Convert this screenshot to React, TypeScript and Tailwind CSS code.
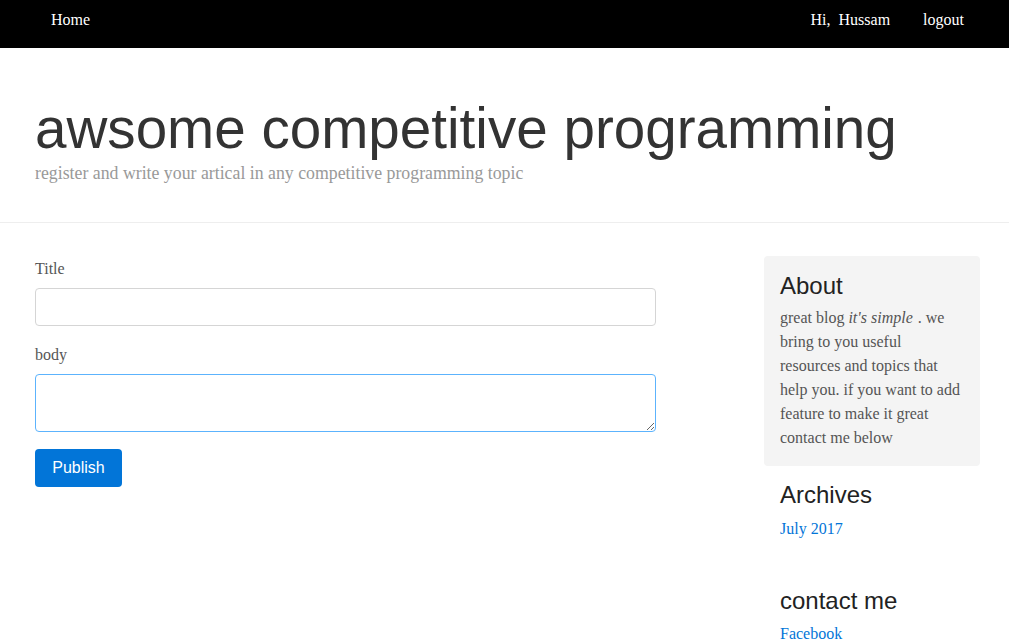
export default function App() {
  return (
    <div className="min-h-screen bg-white font-['Liberation_Serif',serif] text-[16px] text-[#555]">
      {/* NAVBAR */}
      <nav className="h-12 bg-black flex items-start pt-[8px] pl-[51px] pr-[45px] text-white">
        <a className="leading-6">Home</a>
        <div className="ml-auto flex items-center gap-[33px] leading-6">
          <span className="whitespace-pre">Hi,  Hussam</span>
          <a>logout</a>
        </div>
      </nav>

      {/* HEADER */}
      <header className="border-b border-[#eee] px-[35px] pt-[50px] pb-[35px]">
        <h1 className="font-['Liberation_Sans',Arial,sans-serif] text-[56.6px] leading-[62px] text-[#333]">
          awsome competitive programming
        </h1>
        <p className="text-[17.8px] leading-[27px] text-[#999]">
          register and write your artical in any competitive programming topic
        </p>
      </header>

      {/* CONTENT */}
      <div className="flex pl-[35px] pt-[35px]">
        <main className="w-[621px] pt-[1px]">
          <label className="block leading-6 mb-[7px] -mt-[2px]">Title</label>
          <input className="block w-full h-[38px] border border-[#d5d5d5] rounded-[4px] px-3 outline-none" />
          <label className="block leading-6 mt-[17px] mb-[7px]">body</label>
          <textarea className="block w-full h-[58px] border border-[#5cb3fd] rounded-[4px] px-3 outline-none" />
          <button className="mt-[17px] h-[38px] w-[87px] rounded-[4px] bg-[#0275d8] text-white font-['Liberation_Sans',Arial,sans-serif] text-[16px]">
            Publish
          </button>
        </main>

        <aside className="ml-[108px] w-[216px] -mt-[2px]">
          <div className="bg-[#f4f4f4] rounded-[4px] px-4 pt-[15px] pb-[16px]">
            <h4 className="font-['Liberation_Sans',Arial,sans-serif] text-[24px] leading-[30px] text-[#222] mb-[5px]">About</h4>
            <p className="leading-6">
              great blog <em className="pr-[1px]">it's simple</em> . we bring to you useful resources and topics that help you. if you want to add feature to make it great contact me below
            </p>
          </div>
          <div className="px-4 pt-[14px]">
            <h4 className="font-['Liberation_Sans',Arial,sans-serif] text-[24px] leading-[30px] text-[#222] mb-[7px]">Archives</h4>
            <a className="block leading-6 text-[#0275d8]">July 2017</a>
          </div>
          <div className="px-4 pt-[45px]">
            <h4 className="font-['Liberation_Sans',Arial,sans-serif] text-[24px] leading-[30px] text-[#222] mb-[6px]">contact me</h4>
            <a className="block leading-6 text-[#0275d8]">Facebook</a>
          </div>
        </aside>
      </div>
    </div>
  );
}
